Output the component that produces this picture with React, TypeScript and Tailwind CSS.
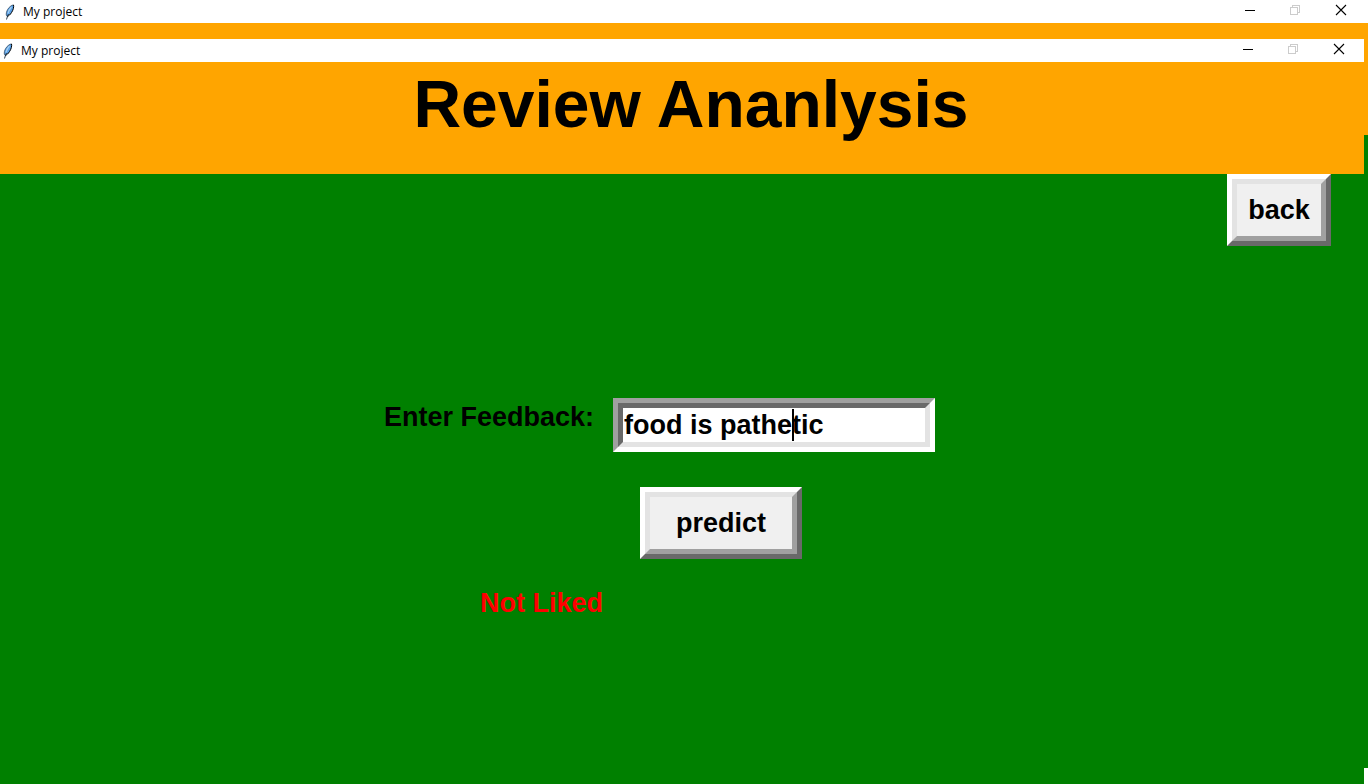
import { useState } from "react";
import type { ReactNode } from "react";

function Feather() {
  return (
    <svg className="h-4 w-4 shrink-0" viewBox="0 0 16 16" fill="none" aria-hidden="true">
      <path d="M10.500 .8C8 1.300 4.500 4.600 3.500 8.200c-.5 1.700-.3 3.200.2 4.200 1.700-.2 3.600-1.800 4.800-3.800C10.200 6.300 11.200 3 10.500 .8Z" fill="#5aa0e6" />
      <path d="M10 1C7.500 1.500 4.300 4.800 3.500 8.200c-.4 1.400-.3 2.600 0 3.600" stroke="#3a5068" strokeWidth=".8" />
      <path d="M10.500 .8c.6 2.200-.4 5.500-2 7.800-1.200 2-2.800 3.500-4.500 3.900" stroke="#000" strokeWidth="1" />
      <path d="M8.500 3C6.800 4.800 5.500 7 5 9.500" stroke="#a9d2f2" strokeWidth="1.100" />
      <path d="M5.500 10C4.600 12 4 13.500 3.500 15.500" stroke="#1b2b3c" strokeWidth=".9" />
    </svg>
  );
}

function TitleBar({ title, className }: { title: string; className: string }) {
  return (
    <div
      className={`flex h-[23px] items-center bg-white font-['Open_Sans','Noto_Sans',sans-serif] text-[12px] leading-4 font-normal text-black ${className}`}
    >
      <Feather />
      <span className="ml-1 grow">{title}</span>
      <div className="flex h-5 self-start">
        <button type="button" aria-label="Minimize" className="flex w-[45px] items-center justify-center">
          <svg width="12" height="12" viewBox="0 0 12 12" shapeRendering="crispEdges">
            <path d="M1 6h10v1H1z" fill="#000" />
          </svg>
        </button>
        <button type="button" aria-label="Restore" disabled className="flex w-[45px] items-center justify-center">
          <svg width="12" height="12" viewBox="0 0 12 12" fill="none" stroke="#ccc" shapeRendering="crispEdges">
            <path d="M1.500 3.500h7v7h-7zM3.500 3.500v-2h7v7h-2" />
          </svg>
        </button>
        <button type="button" aria-label="Close" className="flex w-[47px] items-center justify-center">
          <svg width="12" height="12" viewBox="0 0 12 12" fill="none" stroke="#000" strokeWidth="1.100">
            <path d="M1 1l10 10M11 1L1 11" />
          </svg>
        </button>
      </div>
    </div>
  );
}

function RaisedButton({ children, className }: { children: ReactNode; className: string }) {
  return (
    <button
      type="button"
      className={`flex h-[72px] border-[5px] border-t-white border-r-[#696969] border-b-[#696969] border-l-white ${className}`}
    >
      <span className="flex h-full w-full items-center justify-center border-[5px] border-t-[#e3e3e3] border-r-[#a0a0a0] border-b-[#a0a0a0] border-l-[#e3e3e3] bg-[#f0f0f0]">
        {children}
      </span>
    </button>
  );
}

export default function App() {
  const [feedback, setFeedback] = useState("food is pathetic");

  return (
    <div className="relative flex min-h-screen flex-col overflow-hidden bg-white">
      <TitleBar title="My project" className="pr-1 pl-[3px]" />
      <div className="h-28 bg-[#ffa500]" />
      <div className="mb-4 grow bg-[#008000]" />

      <main className="absolute top-[39px] right-1 bottom-0 left-0 flex flex-col bg-[#008000] font-['Liberation_Sans',Arial,sans-serif] text-[27px] leading-8 font-bold text-black">
        <TitleBar title="My project" className="pr-0.5 pl-px" />
        <header className="flex h-28 justify-center bg-[#ffa500] pt-1 pl-[18px]">
          <h1 className="text-[66px] leading-[76px]">Review Ananlysis</h1>
        </header>
        <div className="flex justify-end pr-[33px]">
          <RaisedButton className="w-[104px]">back</RaisedButton>
        </div>

        <form className="mt-[152px] flex flex-col items-start pl-96">
          <div className="flex items-start">
            <label htmlFor="feedback" className="w-[229px] pt-[3px]">
              Enter Feedback:
            </label>
            <div className="w-[322px] border-[5px] border-t-[#a0a0a0] border-r-white border-b-white border-l-[#a0a0a0]">
              <div className="relative border-[5px] border-t-[#696969] border-r-[#e3e3e3] border-b-[#e3e3e3] border-l-[#696969] bg-white">
                <input
                  id="feedback"
                  type="text"
                  value={feedback}
                  onChange={(event) => setFeedback(event.target.value)}
                  className="block h-[34px] w-full bg-white px-px outline-none"
                />
                <span className="absolute top-px left-[169px] h-8 w-0.5 bg-black" />
              </div>
            </div>
          </div>
          <div className="mt-[35px] ml-64">
            <RaisedButton className="w-[162px]">predict</RaisedButton>
          </div>
          <output htmlFor="feedback" className="mt-7 ml-24 text-[#ff0000]">
            Not Liked
          </output>
        </form>
      </main>
    </div>
  );
}
